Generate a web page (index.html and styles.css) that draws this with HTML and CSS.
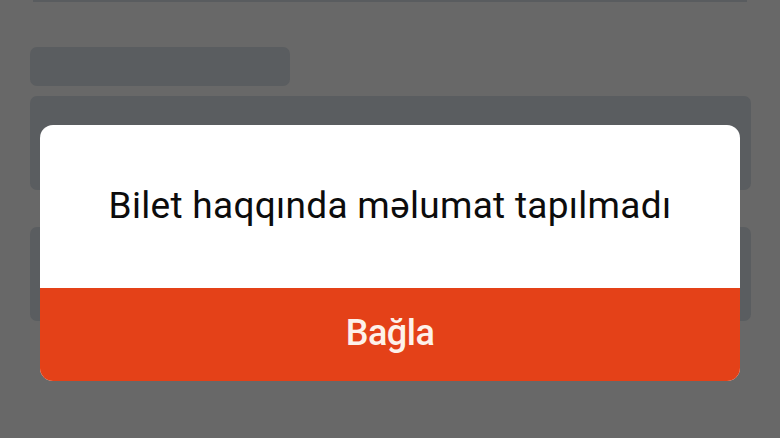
FILE: index.html
```html
<!DOCTYPE html>
<html lang="az">
<head>
  <meta charset="UTF-8" />
  <meta name="viewport" content="width=device-width, initial-scale=1.0"/>
  <title>Bilet</title>
  <link rel="stylesheet" href="styles.css">
</head>
<body>

<div class="screen">
  <div class="top-edge"></div>
  <div class="skeleton skeleton-title"></div>
  <div class="skeleton skeleton-card first"></div>
  <div class="skeleton skeleton-card second"></div>

  <div class="overlay">
    <div class="dialog">
      <div class="dialog-body">
        <p>Bilet haqqında məlumat tapılmadı</p>
      </div>
      <button class="dialog-btn">Bağla</button>
    </div>
  </div>
</div>

</body>
</html>
```

FILE: styles.css
```css
body {
  margin: 0;
  background: #686868;
  font-family: Roboto, 'Noto Sans', sans-serif;
}
.screen {
  position: relative;
  width: 780px;
  height: 438px;
  overflow: hidden;
  padding: 0 30px;
  box-sizing: border-box;
}
.top-edge {
  height: 2px;
  margin: 0 3px 0 3px;
  background: #595c5f;
}
.skeleton {
  background: #5a5d60;
  border-radius: 7px;
}
.skeleton-title {
  width: 260px;
  height: 39px;
  margin-top: 45px;
}
.skeleton-card {
  height: 94px;
  margin-left: 0;
  margin-right: -1px;
}
.skeleton-card.first {
  margin-top: 10px;
}
.skeleton-card.second {
  margin-top: 37px;
}
.overlay {
  position: absolute;
  left: 40px;
  top: 125px;
  width: 700px;
}
.dialog {
  background: #fff;
  border-radius: 13px;
  overflow: hidden;
}
.dialog-body {
  height: 163px;
  display: flex;
  align-items: center;
  justify-content: center;
}
.dialog-body p {
  margin: 0;
  padding-bottom: 2px;
  font-size: 37px;
  letter-spacing: 0.3px;
  color: #0c0c0c;
}
.dialog-btn {
  display: block;
  width: 100%;
  height: 93px;
  border: none;
  background: #e44118;
  color: #fdf1ea;
  font-family: Roboto, sans-serif;
  font-weight: 500;
  font-size: 36px;
  letter-spacing: -0.5px;
  padding-bottom: 4px;
}
```
